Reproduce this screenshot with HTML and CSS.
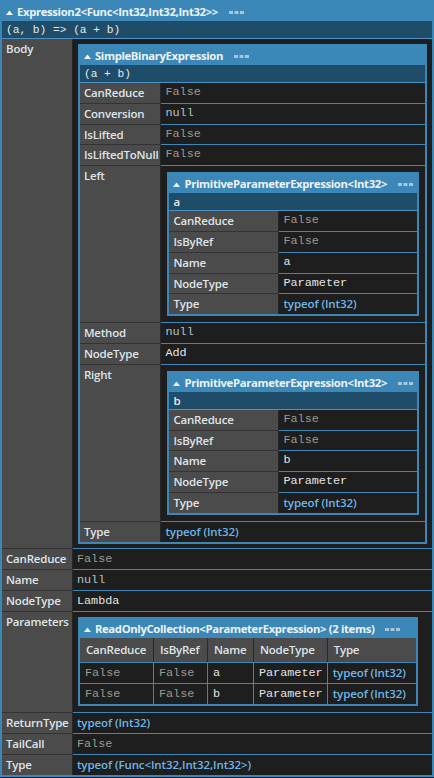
FILE: index.html
```html
<!DOCTYPE html>
<html>
<head>
<meta charset="utf-8">
<link rel="stylesheet" href="styles.css">
</head>
<body>
<table class="obj outer">
  <tr><td class="hdr" colspan="2"><svg class="tri" width="7" height="5" viewBox="0 0 7 5"><polygon points="0,5 3.5,0.5 7,5"/></svg>Expression2&lt;Func&lt;Int32,Int32,Int32&gt;&gt;<svg class="dots" width="15" height="4" viewBox="0 0 15 4"><rect x="0" y="0" width="4" height="3"/><rect x="5.5" y="0" width="4" height="3"/><rect x="11" y="0" width="4" height="3"/></svg></td></tr>
  <tr><td class="sum m" colspan="2">(a, b) =&gt; (a + b)</td></tr>
  <tr>
    <th class="k k0">Body</th>
    <td class="v box0">
      <table class="obj fill">
        <tr><td class="hdr" colspan="2"><svg class="tri" width="7" height="5" viewBox="0 0 7 5"><polygon points="0,5 3.5,0.5 7,5"/></svg>SimpleBinaryExpression<svg class="dots" width="15" height="4" viewBox="0 0 15 4"><rect x="0" y="0" width="4" height="3"/><rect x="5.5" y="0" width="4" height="3"/><rect x="11" y="0" width="4" height="3"/></svg></td></tr>
        <tr><td class="sum m" colspan="2">(a + b)</td></tr>
        <tr><th class="k k1">CanReduce</th><td class="v m f">False</td></tr>
        <tr><th class="k">Conversion</th><td class="v m n">null</td></tr>
        <tr><th class="k">IsLifted</th><td class="v m f">False</td></tr>
        <tr><th class="k">IsLiftedToNull</th><td class="v m f">False</td></tr>
        <tr>
          <th class="k">Left</th>
          <td class="v box2">
            <table class="obj fill">
              <tr><td class="hdr" colspan="2"><svg class="tri" width="7" height="5" viewBox="0 0 7 5"><polygon points="0,5 3.5,0.5 7,5"/></svg>PrimitiveParameterExpression&lt;Int32&gt;<svg class="dots" width="15" height="4" viewBox="0 0 15 4"><rect x="0" y="0" width="4" height="3"/><rect x="5.5" y="0" width="4" height="3"/><rect x="11" y="0" width="4" height="3"/></svg></td></tr>
              <tr><td class="sum s" colspan="2">a</td></tr>
              <tr><th class="k k2">CanReduce</th><td class="v m f">False</td></tr>
              <tr><th class="k">IsByRef</th><td class="v m f">False</td></tr>
              <tr><th class="k">Name</th><td class="v m">a</td></tr>
              <tr><th class="k">NodeType</th><td class="v m">Parameter</td></tr>
              <tr><th class="k">Type</th><td class="v t">typeof (Int32)</td></tr>
            </table>
          </td>
        </tr>
        <tr><th class="k">Method</th><td class="v m n">null</td></tr>
        <tr><th class="k">NodeType</th><td class="v m">Add</td></tr>
        <tr>
          <th class="k">Right</th>
          <td class="v box2">
            <table class="obj fill">
              <tr><td class="hdr" colspan="2"><svg class="tri" width="7" height="5" viewBox="0 0 7 5"><polygon points="0,5 3.5,0.5 7,5"/></svg>PrimitiveParameterExpression&lt;Int32&gt;<svg class="dots" width="15" height="4" viewBox="0 0 15 4"><rect x="0" y="0" width="4" height="3"/><rect x="5.5" y="0" width="4" height="3"/><rect x="11" y="0" width="4" height="3"/></svg></td></tr>
              <tr><td class="sum s" colspan="2">b</td></tr>
              <tr><th class="k k2">CanReduce</th><td class="v m f">False</td></tr>
              <tr><th class="k">IsByRef</th><td class="v m f">False</td></tr>
              <tr><th class="k">Name</th><td class="v m">b</td></tr>
              <tr><th class="k">NodeType</th><td class="v m">Parameter</td></tr>
              <tr><th class="k">Type</th><td class="v t">typeof (Int32)</td></tr>
            </table>
          </td>
        </tr>
        <tr><th class="k">Type</th><td class="v t">typeof (Int32)</td></tr>
      </table>
    </td>
  </tr>
  <tr class="r21"><th class="k">CanReduce</th><td class="v m f">False</td></tr>
  <tr class="r21"><th class="k">Name</th><td class="v m n">null</td></tr>
  <tr class="r21"><th class="k">NodeType</th><td class="v m">Lambda</td></tr>
  <tr>
    <th class="k">Parameters</th>
    <td class="v box1">
      <table class="obj coll">
        <tr><td class="hdr" colspan="5"><svg class="tri" width="7" height="5" viewBox="0 0 7 5"><polygon points="0,5 3.5,0.5 7,5"/></svg>ReadOnlyCollection&lt;ParameterExpression&gt; (2 items)<svg class="dots" width="15" height="4" viewBox="0 0 15 4"><rect x="0" y="0" width="4" height="3"/><rect x="5.5" y="0" width="4" height="3"/><rect x="11" y="0" width="4" height="3"/></svg></td></tr>
        <tr>
          <th class="ch c1">CanReduce</th>
          <th class="ch c2">IsByRef</th>
          <th class="ch c3">Name</th>
          <th class="ch c4">NodeType</th>
          <th class="ch c5">Type</th>
        </tr>
        <tr>
          <td class="d m f">False</td>
          <td class="d m f">False</td>
          <td class="d m">a</td>
          <td class="d m">Parameter</td>
          <td class="d t">typeof (Int32)</td>
        </tr>
        <tr>
          <td class="d m f">False</td>
          <td class="d m f">False</td>
          <td class="d m">b</td>
          <td class="d m">Parameter</td>
          <td class="d t">typeof (Int32)</td>
        </tr>
      </table>
    </td>
  </tr>
  <tr class="r21"><th class="k">ReturnType</th><td class="v t">typeof (Int32)</td></tr>
  <tr class="r21"><th class="k">TailCall</th><td class="v m f">False</td></tr>
  <tr class="r21"><th class="k">Type</th><td class="v t">typeof (Func&lt;Int32,Int32,Int32&gt;)</td></tr>
</table>
</body>
</html>
```

FILE: styles.css
```css
html, body {
  margin: 0;
  padding: 0;
  background: #1e1e1e;
}

body {
  font-family: "Open Sans", "Noto Sans", sans-serif;
  color: #e4e4e4;
}

table.obj {
  border-collapse: separate;
  border-spacing: 0;
  border: 2px solid #3b87b7;
  background: #1e1e1e;
}

.outer {
  width: 434px;
  border-width: 1px 2px 2px 1px;
}

.fill {
  width: 100%;
}

.hdr {
  background: #3b87b7;
  color: #eef3f7;
  font-weight: 700;
  font-size: 11.3px;
  letter-spacing: -0.35px;
  line-height: 15px;
  padding: 2px 4px;
  white-space: nowrap;
  text-align: left;
}

.tri {
  fill: #eef3f7;
  margin-right: 4px;
  vertical-align: 1px;
}

.dots {
  fill: #a7c6dd;
  margin-left: 11px;
  vertical-align: 1px;
}

.sum {
  background: #1f4d69;
  color: #e6e9ec;
  line-height: 16px;
  padding: 1px 4px 0;
  border-bottom: 1px solid #4a93c4;
  text-align: left;
  white-space: nowrap;
}

.sum.s {
  font-family: "Open Sans", sans-serif;
  font-weight: 600;
  font-size: 11.5px;
}

.m {
  font-family: "Liberation Mono", "DejaVu Sans Mono", monospace;
  font-size: 11.8px;
}

.sum.m {
  font-size: 11.2px;
}

.f {
  color: #9a9a92;
}

.n {
  color: #b4c1c7;
}

.t {
  color: #6db7e8;
  font-weight: 600;
  font-size: 11.5px;
  letter-spacing: -0.1px;
  white-space: nowrap;
}

th.k {
  box-sizing: border-box;
  background: #4b4b4b;
  color: #dfe4e7;
  font-weight: 600;
  font-size: 11.5px;
  letter-spacing: -0.2px;
  line-height: 15.8px;
  padding: 2px 2px 2px 4px;
  text-align: left;
  vertical-align: top;
  white-space: nowrap;
  border-right: 1px solid #262626;
  border-bottom: 1px solid #333333;
}

.k0 { width: 71px; }
.k1 { width: 84px; }
.k2 { width: 110px; }

td.v {
  background: #1e1e1e;
  line-height: 15.8px;
  padding: 2px 4px;
  vertical-align: top;
  border-bottom: 1px solid #3b87b7;
}

.r21 > th.k,
.r21 > td.v {
  line-height: 16px;
}

tr:last-child > th.k,
tr:last-child > td.v {
  border-bottom: 0;
}

td.box0 {
  padding: 5px 5px 4px 5px;
}

td.box1 {
  padding: 5px 5px 6px 5px;
}

td.box2 {
  padding: 6px;
}

th.ch {
  box-sizing: border-box;
  background: #4b4b4b;
  color: #dfe4e7;
  font-weight: 600;
  font-size: 11.5px;
  letter-spacing: -0.2px;
  line-height: 16px;
  padding: 4px 6px;
  text-align: left;
  white-space: nowrap;
  border-right: 1px solid #2a2a2a;
}

th.ch:last-child {
  border-right: 0;
}

.c1 { width: 74px; }
.c2 { width: 54px; }
.c3 { width: 46px; }
.c4 { width: 71px; }
.c5 { width: 88px; }

td.d {
  line-height: 16px;
  padding: 2px 4px 2px 5px;
  white-space: nowrap;
  border-right: 1px solid #3b87b7;
  border-top: 1px solid #3b87b7;
}

td.d:last-child {
  border-right: 0;
}
```
